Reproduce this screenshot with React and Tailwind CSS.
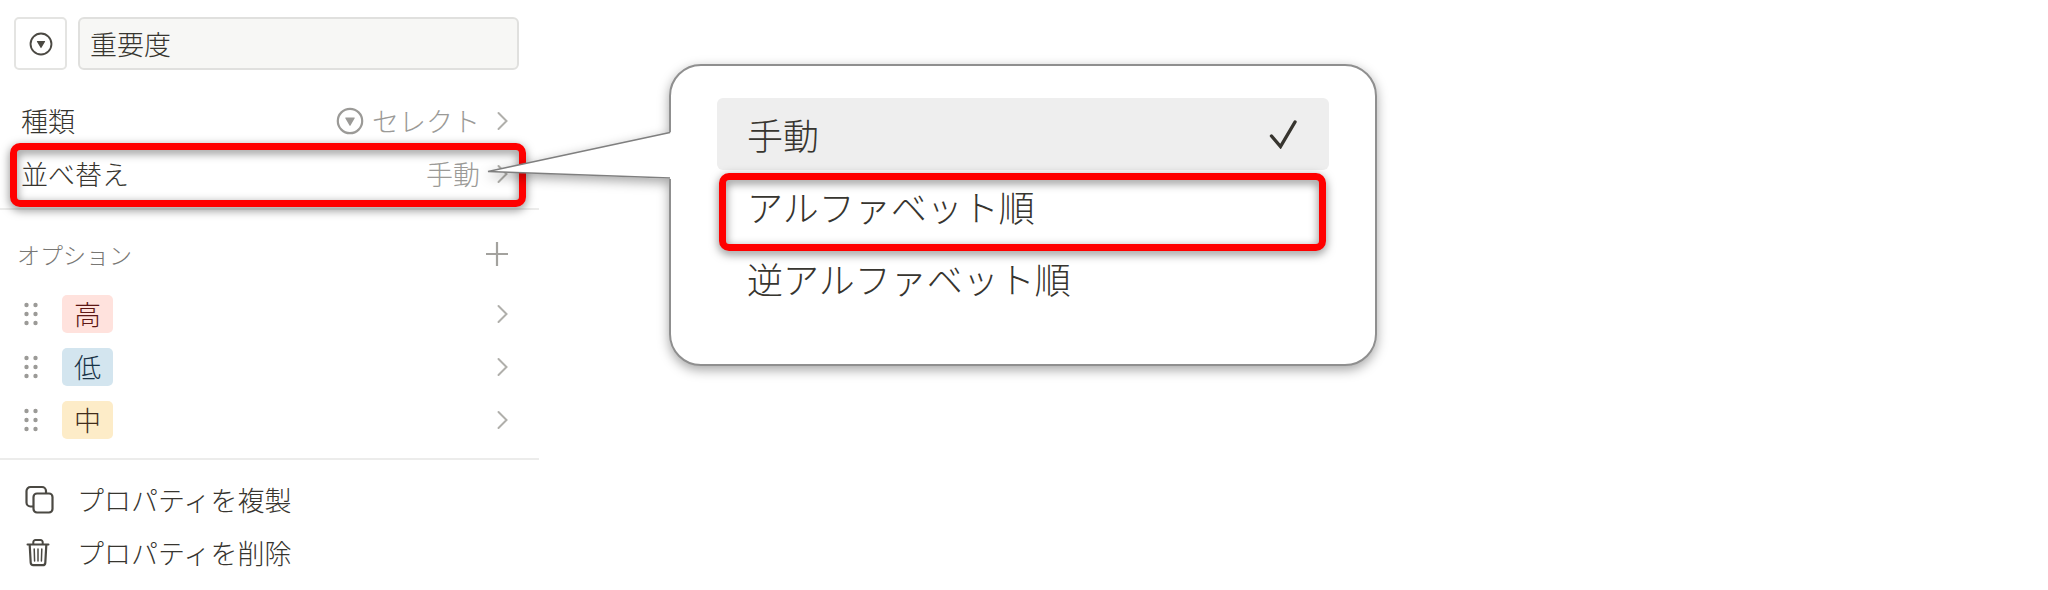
const OPTIONS = [
  { label: '高', tag: 'bg-[#ffe2dd] text-[#5d1715]' },
  { label: '低', tag: 'bg-[#d3e5ef] text-[#183347]' },
  { label: '中', tag: 'bg-[#fdecc8] text-[#402c1b]' },
]

function SelectIcon({ className }) {
  return (
    <svg viewBox="0 0 28 28" className={className} fill="none" aria-hidden="true">
      <circle cx="14" cy="14" r="12.2" stroke="currentColor" strokeWidth="2.2" />
      <path d="M9.8 10.4h8.4a.6.6 0 0 1 .5.9l-4.2 7.2a.6.6 0 0 1-1 0l-4.2-7.2a.6.6 0 0 1 .5-.9z" fill="currentColor" />
    </svg>
  )
}

function Chevron() {
  return (
    <svg viewBox="0 0 12 20" className="h-5 w-3 shrink-0 text-[#b0afab]" fill="none" aria-hidden="true">
      <path d="M2.500 2l8 8-8 8" stroke="currentColor" strokeWidth="2" strokeLinecap="round" />
    </svg>
  )
}

function DragHandle() {
  return (
    <svg viewBox="0 0 14 24" className="h-6 w-3.5 shrink-0 text-[#9b9a97]" fill="currentColor" aria-hidden="true">
      {[3, 12, 21].map((y) => (
        <g key={y}>
          <circle cx="2.5" cy={y} r="2.2" />
          <circle cx="11.5" cy={y} r="2.2" />
        </g>
      ))}
    </svg>
  )
}

function DuplicateIcon() {
  return (
    <svg viewBox="0 0 30 30" className="size-[30px] text-[#4b4943]" fill="none" stroke="currentColor" strokeWidth="2.2" aria-hidden="true">
      <path d="M8.500 21.500H5.500A4 4 0 0 1 1.500 17.500V6A4 4 0 0 1 5.500 2H17a4 4 0 0 1 4 4v2.500" />
      <rect x="8.500" y="8.500" width="19" height="19" rx="3.500" />
    </svg>
  )
}

function TrashIcon() {
  return (
    <svg viewBox="0 0 30 30" className="size-[30px] text-[#4b4943]" fill="none" stroke="currentColor" strokeLinecap="round" aria-hidden="true">
      <path d="M2.500 6.500h21" strokeWidth="2" />
      <path d="M8.300 6V4.200A2.200 2.200 0 0 1 10.500 2h5a2.200 2.200 0 0 1 2.200 2.200V6" strokeWidth="2" />
      <path d="M4.700 7l1 17.800a2.600 2.600 0 0 0 2.600 2.400h9.400a2.600 2.600 0 0 0 2.600-2.400l1-17.800" strokeWidth="2.200" />
      <path d="M9.200 11l.4 12M13 11v12M16.800 11l-.4 12" strokeWidth="1.500" />
    </svg>
  )
}

function Highlight({ className }) {
  return (
    <span
      className={`pointer-events-none absolute rounded-[10px] border-[7px] border-[#ff0000] drop-shadow-[0_3px_5px_rgba(0,0,0,0.5)] ${className}`}
    />
  )
}

function PropertyPanel() {
  return (
    <section className="w-full max-w-[539px] text-[27px] leading-10 text-[#37352f]">
      <div className="flex gap-[11px] pt-[17px] pr-5 pl-3.5">
        <button
          type="button"
          aria-label="アイコン"
          className="flex size-[53px] shrink-0 items-center justify-center rounded-[5px] border-2 border-[#e4e4e2] text-[#4b4943]"
        >
          <SelectIcon className="size-6" />
        </button>
        <input
          type="text"
          aria-label="プロパティ名"
          defaultValue="重要度"
          className="h-[53px] w-full min-w-0 rounded-md border-2 border-[#e0e0de] bg-[#f7f7f5] px-2.5 outline-none"
        />
      </div>

      <div className="mt-6 border-b-2 border-[#ececeb] pb-2">
        <button type="button" className="flex h-[53px] w-full items-center pr-[31px] pl-[21px]">
          <span>種類</span>
          <span className="mr-4 ml-auto flex items-center gap-2 text-[#9b9a97]">
            <SelectIcon className="size-7" />
            セレクト
          </span>
          <Chevron />
        </button>
        <button type="button" className="relative flex h-[53px] w-full items-center pr-[31px] pl-[21px]">
          <Highlight className="-top-1 right-[13px] -bottom-[7px] left-2.5" />
          <span className="relative">並べ替え</span>
          <span className="relative mr-4 ml-auto text-[#9b9a97]">手動</span>
          <Chevron />
        </button>
      </div>

      <div className="mt-2.5 flex h-[67px] items-center justify-between pr-[30px] pl-[17px]">
        <h2 className="text-[23px] text-[#787774]">オプション</h2>
        <button type="button" aria-label="オプションを追加" className="text-[#a3a29e]">
          <svg viewBox="0 0 24 24" className="size-6" fill="none" aria-hidden="true">
            <path d="M12 0v24M1 12h22" stroke="currentColor" strokeWidth="2.200" />
          </svg>
        </button>
      </div>

      <ul className="border-b-2 border-[#ececeb] pb-3">
        {OPTIONS.map(({ label, tag }) => (
          <li key={label}>
            <button type="button" className="flex h-[53px] w-full items-center pr-[31px] pl-6">
              <DragHandle />
              <span className={`ml-6 flex h-[38px] items-center rounded-[5px] px-3 ${tag}`}>{label}</span>
              <span className="ml-auto flex">
                <Chevron />
              </span>
            </button>
          </li>
        ))}
      </ul>

      <div className="pt-[13px]">
        <button type="button" className="flex h-[53px] w-full items-center gap-[22px] pl-[25px]">
          <DuplicateIcon />
          プロパティを複製
        </button>
        <button type="button" className="flex h-[53px] w-full items-center gap-[22px] pl-[25px]">
          <TrashIcon />
          プロパティを削除
        </button>
      </div>
    </section>
  )
}

function SortCallout() {
  return (
    <section className="relative mt-16 ml-[130px] w-full max-w-[708px] drop-shadow-[0_4px_6px_rgba(0,0,0,0.35)]">
      <div className="rounded-[32px] border-2 border-[#8f8f8f] bg-white px-[46px] pt-8 pb-[50px] text-4xl text-[#37352f]">
        <button type="button" className="flex h-[72px] w-full items-center justify-between rounded-md bg-[#eeeeee] pr-8 pl-[30px]">
          手動
          <svg viewBox="0 0 28 30" className="h-[30px] w-7" fill="none" aria-hidden="true">
            <path d="M2.500 17l9 10.500L26 3" stroke="currentColor" strokeWidth="3.400" strokeLinecap="round" />
          </svg>
        </button>
        <button type="button" className="relative flex h-[72px] w-full items-center pl-[30px]">
          <Highlight className="top-[3px] right-[3px] -bottom-[9px] left-0.5" />
          <span className="relative">アルファベット順</span>
        </button>
        <button type="button" className="flex h-[72px] w-full items-center pl-[30px]">逆アルファベット順</button>
      </div>
      {/* speech bubble tail, overlaps the border to open it */}
      <svg viewBox="0 0 186 50" className="absolute top-[66px] -left-[183px] h-[50px] w-[186px]" aria-hidden="true">
        <path d="M186 2L2 41.500 186 49z" fill="#fff" />
        <path d="M184 2.500L2 41.500 184 48" fill="none" stroke="#7f7f7f" strokeWidth="1.500" />
      </svg>
    </section>
  )
}

export default function App() {
  return (
    <main className="flex min-h-screen items-start bg-white font-['Noto_Sans_CJK_JP',sans-serif] font-light">
      <PropertyPanel />
      <SortCallout />
    </main>
  )
}
